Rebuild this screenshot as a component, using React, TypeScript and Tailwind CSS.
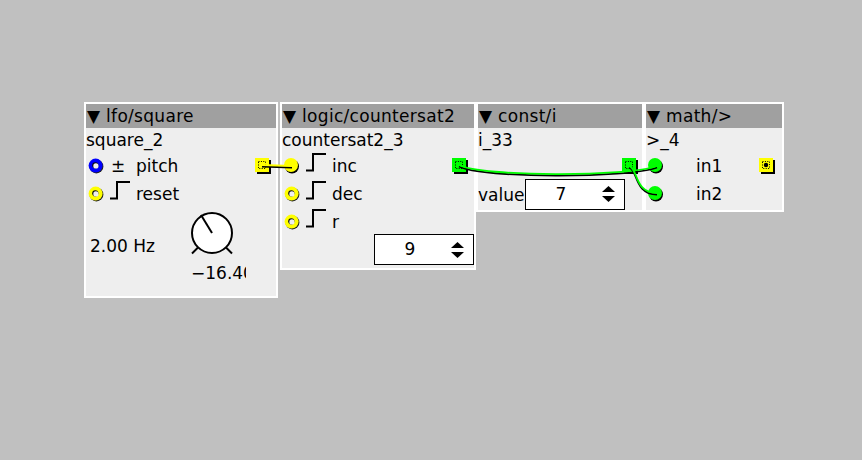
import React from "react";

function Inlet({ color, connected }: { color: string; connected?: boolean }) {
  return connected ? (
    <svg width="18" height="18" viewBox="0 0 18 18" className="shrink-0">
      <circle cx="9" cy="9.5" r="7" fill="#000" />
      <circle cx="8" cy="8" r="7" fill={color} />
    </svg>
  ) : (
    <svg width="18" height="18" viewBox="0 0 18 18" className="shrink-0">
      <circle cx="9.4" cy="9.4" r="7" fill="#222" />
      <circle cx="8.6" cy="8.6" r="7" fill={color} />
      <circle cx="8.3" cy="8.3" r="3.1" fill="#111" />
      <circle cx="8.9" cy="8.9" r="2.6" fill="#eeeeee" />
    </svg>
  );
}

function Outlet({ color, connected }: { color: string; connected?: boolean }) {
  return (
    <svg width="16" height="17" viewBox="0 0 16 17" className="shrink-0">
      <rect x="2" y="2" width="14" height="14" fill="#000" />
      <rect x="0" y="0" width="14" height="14" fill={color} />
      <rect x="3.5" y="3.5" width="7" height="7" fill="none" stroke="#000" strokeWidth="1" strokeDasharray="1 1.4" />
      {!connected && <circle cx="7" cy="7" r="2.2" fill="#000" />}
    </svg>
  );
}

function Step() {
  return (
    <svg width="20" height="28" viewBox="0 0 20 28" className="shrink-0">
      <path d="M0,18.5 H7 V2 H20" fill="none" stroke="#000" strokeWidth="2" />
    </svg>
  );
}

function Title({ text }: { text: string }) {
  return (
    <div className="h-[24px] shrink-0 bg-[#a0a0a0] flex items-center pl-[1px] whitespace-nowrap overflow-hidden tracking-[0.3px]">
      ▼ {text}
    </div>
  );
}

function Name({ text }: { text: string }) {
  return <div className="h-[24px] shrink-0 flex items-center whitespace-nowrap">{text}</div>;
}

function Spinner({ value }: { value: string }) {
  return (
    <div className="w-[100px] h-[31px] shrink-0 border border-black bg-white flex items-center">
      <div className="w-[70px] text-center">{value}</div>
      <div className="ml-auto mr-[9px] flex flex-col gap-[4px]">
        <svg width="13" height="6" viewBox="0 0 13 6">
          <path d="M0,6 L6.5,0 L13,6Z" fill="#000" />
        </svg>
        <svg width="13" height="6" viewBox="0 0 13 6">
          <path d="M0,0 L6.5,6 L13,0Z" fill="#000" />
        </svg>
      </div>
    </div>
  );
}

function Row({
  inlet,
  glyph,
  label,
  outlet,
  outletMr,
}: {
  inlet: React.ReactNode;
  glyph?: React.ReactNode;
  label: string;
  outlet?: React.ReactNode;
  outletMr?: string;
}) {
  return (
    <div className="h-[28px] shrink-0 flex items-center">
      <div className="w-[20px] flex justify-center">{inlet}</div>
      <div className="w-[20px] ml-[4px] flex items-center justify-start">{glyph}</div>
      <div className="ml-[6px] whitespace-nowrap">{label}</div>
      {outlet && <div className={"ml-auto flex " + (outletMr ?? "")}>{outlet}</div>}
    </div>
  );
}

function Knob() {
  return (
    <svg width="48" height="48" viewBox="0 0 48 48" className="shrink-0">
      <path d="M10,36.5 L4,42.5" stroke="#000" strokeWidth="2" />
      <path d="M38,36.5 L44,42.5" stroke="#000" strokeWidth="2" />
      <circle cx="24" cy="22" r="20" fill="#fff" stroke="#000" strokeWidth="2" />
      <path d="M24,22 L13,4" stroke="#000" strokeWidth="2" />
    </svg>
  );
}

export default function App() {
  return (
    <div className="relative w-[862px] h-[460px] bg-[#c0c0c0] overflow-hidden font-['DejaVu_Sans',sans-serif] text-[17px] leading-none text-black">
      {/* lfo/square */}
      <div className="absolute left-[84px] top-[102px] w-[194px] h-[196px] border-2 border-white bg-[#eeeeee] flex flex-col">
        <Title text="lfo/square" />
        <Name text="square_2" />
        <Row
          inlet={<Inlet color="#0000ff" />}
          glyph={<span className="ml-[1px]">±</span>}
          label="pitch"
          outlet={<Outlet color="#ffff00" connected />}
          outletMr="mr-[5px]"
        />
        <Row inlet={<Inlet color="#ffff00" />} glyph={<Step />} label="reset" />
        <div className="flex h-[88px]">
          <div className="w-[105px] pl-[4px] pt-[30px] whitespace-nowrap">2.00 Hz</div>
          <div className="w-[55px] flex flex-col overflow-hidden">
            <div className="-ml-[3px] mt-[3px]">
              <Knob />
            </div>
            <div className="mt-[6px] whitespace-nowrap">−16.40</div>
          </div>
        </div>
      </div>

      {/* logic/countersat2 */}
      <div className="absolute left-[280px] top-[102px] w-[196px] h-[168px] border-2 border-white bg-[#eeeeee] flex flex-col">
        <Title text="logic/countersat2" />
        <Name text="countersat2_3" />
        <Row
          inlet={<Inlet color="#ffff00" connected />}
          glyph={<Step />}
          label="inc"
          outlet={<Outlet color="#00ff00" connected />}
          outletMr="mr-[6px]"
        />
        <Row inlet={<Inlet color="#ffff00" />} glyph={<Step />} label="dec" />
        <Row inlet={<Inlet color="#ffff00" />} glyph={<Step />} label="r" />
        <div className="flex justify-end -mt-[2px]">
          <Spinner value="9" />
        </div>
      </div>

      {/* const/i */}
      <div className="absolute left-[476px] top-[102px] w-[168px] h-[110px] border-2 border-white bg-[#eeeeee] flex flex-col">
        <Title text="const/i" />
        <Name text="i_33" />
        <div className="h-[28px] shrink-0 flex items-center justify-end pr-[4px]">
          <Outlet color="#00ff00" connected />
        </div>
        <div className="h-[30px] flex items-center">
          <span className="w-[47px]">value</span>
          <div className="mt-[-2px]">
            <Spinner value="7" />
          </div>
        </div>
      </div>

      {/* math/> */}
      <div className="absolute left-[644px] top-[102px] w-[140px] h-[110px] border-2 border-white bg-[#eeeeee] flex flex-col">
        <Title text="math/>" />
        <Name text=">_4" />
        <Row
          inlet={<Inlet color="#00ff00" connected />}
          label="in1"
          outlet={<Outlet color="#ffff00" />}
          outletMr="mr-[7px]"
        />
        <Row inlet={<Inlet color="#00ff00" connected />} label="in2" />
      </div>

      {/* wires */}
      <svg className="absolute inset-0 pointer-events-none" width="862" height="460" viewBox="0 0 862 460">
        <g fill="none">
          <path d="M262,166.5 L292,167.5" stroke="#000" strokeWidth="1.8" />
          <path d="M262,165 L292,166" stroke="#ffff00" strokeWidth="1.8" />
          <path d="M459,166.5 C482,178.5 628,178.5 657,167.5" stroke="#000" strokeWidth="1.8" />
          <path d="M459,165 C482,177 628,177 657,166" stroke="#00ff00" strokeWidth="1.8" />
          <path d="M629,167.5 C638,169.5 634,194.5 657,194.5" stroke="#000" strokeWidth="1.8" />
          <path d="M629,166 C638,168 634,193 657,193" stroke="#00ff00" strokeWidth="1.8" />
        </g>
      </svg>
    </div>
  );
}
